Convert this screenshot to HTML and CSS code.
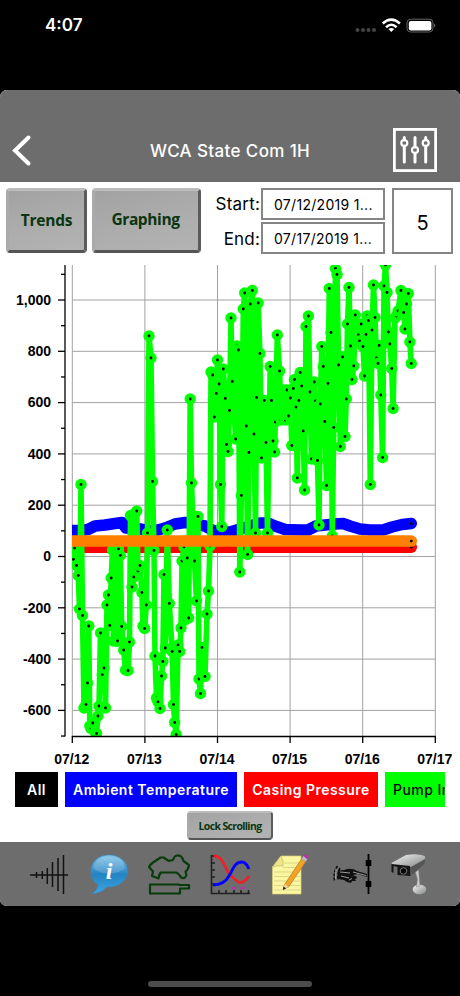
FILE: index.html
```html
<!DOCTYPE html>
<html lang="en">

<head>
    <meta charset="UTF-8">
    <title>WCA State Com 1H</title>
    <link rel="stylesheet" href="styles.css">
</head>

<body>
    <div class="status-bar">
        <span class="time">4:07</span>
        <svg class="status-icons" width="82" height="16" viewBox="0 0 82 16">
            <g fill="#444">
                <circle cx="3.5" cy="12" r="2" /><circle cx="9" cy="12" r="2" />
                <circle cx="14.5" cy="12" r="2" /><circle cx="20" cy="12" r="2" />
            </g>
            <g fill="none" stroke="#fff" stroke-width="2.5">
                <path d="M28.7 5.5 Q37.3 -2.2 45.9 5.5" />
                <path d="M32 9.2 Q37.3 4.4 42.6 9.2" />
            </g>
            <path d="M34.4 11 Q37.3 8.8 40.2 11 L37.3 14 Z" fill="#fff" />
            <rect x="53" y="1.2" width="26" height="12.8" rx="3.6" fill="none" stroke="#666" />
            <rect x="54.8" y="3" width="22.6" height="9.4" rx="2" fill="#fff" />
            <path d="M80.2 5.4 Q82.2 7.5 80.2 9.8 Z" fill="#777" />
        </svg>
    </div>

    <div class="app">
        <div class="header">
            <svg class="back" width="22" height="34" viewBox="0 0 22 34">
                <path d="M18.5 4.5 L5 17.5 L18.5 30.5" fill="none" stroke="#fff" stroke-width="4" stroke-linecap="round" />
            </svg>
            <h1>WCA State Com 1H</h1>
            <svg class="settings" width="44" height="44" viewBox="0 0 44 44" fill="none" stroke="#fff">
                <rect x="1.4" y="1.4" width="41.2" height="41.2" stroke-width="2.8" />
                <g stroke-width="3" stroke-linecap="round">
                    <path d="M11.3 9.5 V12 M11.3 18 V34 M22 9.5 V19 M22 25 V34 M32.7 9.5 V12 M32.7 18 V34" />
                </g>
                <g stroke-width="2.2">
                    <circle cx="11.3" cy="15" r="3" /><circle cx="22" cy="22" r="3" /><circle cx="32.7" cy="15" r="3" />
                </g>
            </svg>
        </div>

        <div class="controls">
            <button class="btn trends">Trends</button>
            <button class="btn graphing">Graphing</button>
            <div class="dates">
                <label>Start:</label>
                <div class="date-box">07/12/2019 1...</div>
                <label>End:</label>
                <div class="date-box">07/17/2019 1...</div>
            </div>
            <div class="days">5</div>
        </div>

        <svg id="chart" class="chart" width="460" height="507" viewBox="0 260 460 507"></svg>

        <div class="legend">
            <span class="tag all">All</span>
            <span class="tag ambient">Ambient Temperature</span>
            <span class="tag casing">Casing Pressure</span>
            <span class="tag pump">Pump In</span>
        </div>
        <button class="btn lock">Lock Scrolling</button>

        <div class="toolbar">
            <svg width="44" height="44" viewBox="0 0 44 44" stroke="#111" stroke-width="1.5">
                <path d="M3 23 H41 M9.5 20 V26 M15.3 19 V27 M20.3 16 V32 M25.5 10 V35 M31 6 V39 M36.5 3 V42" />
            </svg>
            <svg width="44" height="44" viewBox="1 0 44 44">
                <defs>
                    <linearGradient id="bubble" x1="0" y1="0" x2="0" y2="1">
                        <stop offset="0" stop-color="#83c4e8" />
                        <stop offset=".5" stop-color="#2583c3" />
                        <stop offset="1" stop-color="#39a5e2" />
                    </linearGradient>
                </defs>
                <path d="M22 3 C33 3 40.5 10 40.5 19 C40.5 28 33 35 20 35 Q13 42 5 41.5 Q11 38 11 32.5 C6 29 4 25 4 19 C4 10 11 3 22 3 Z" fill="url(#bubble)" stroke="#3689bd" stroke-width=".6" />
                <path d="M22 4.5 C32 4.5 38 9 37.5 17 Q22 26 7 17 C6.5 9 13 4.5 22 4.5 Z" fill="#fff" opacity=".16" />
                <text class="info-mark" x="22" y="27">i</text>
            </svg>
            <svg width="44" height="44" viewBox="1 0 44 44" fill="none" stroke="#083d0b" stroke-width="2.2" stroke-linejoin="round">
                <path d="M2 15 Q3 12.5 6 10.5 L13.5 5.5 H16.5 L21.5 8.8 L26 8 Q27 4 30 3.5 Q33.5 3 35 5.5 L36.5 9 L42 13 Q41 18 38.5 19.7 L39.5 23 Q38 27.5 34 25.5 Q32 21.5 29 20.5 L14 20.5 Q12 22 11.5 26.5 L5 24 L6 19.5 Z" />
                <path d="M3 32.5 H32 V33 H42 V36.5 H33 V41.5 H3 Z" />
            </svg>
            <svg width="44" height="44" viewBox="0 0 44 44" fill="none">
                <path d="M2.5 3 V41.5 H41 M2.5 4 H6 M2.5 11 H6 M2.5 18 H6 M2.5 25 H6 M2.5 32 H6 M10 41 V38 M17 41 V38 M25 41 V38 M32 41 V38 M39.5 41 V38" stroke="#222" stroke-width="1.6" />
                <path d="M5 4 C14 4 16 17 21 23 Q26 27.5 30 30.5 Q35 31.5 40 24" stroke="#eb2227" stroke-width="2.8" />
                <path d="M4 33 Q15 33 20 24 C24 18 25 10 33 10 Q37 10 40 17" stroke="#00f" stroke-width="2.8" />
                <path d="M23 36 H27 M31.5 36 H36" stroke="#c02cab" stroke-width="2" />
            </svg>
            <svg width="44" height="44" viewBox="0 0 44 44">
                <path d="M12 4 H32 V42 H3.5 V15 Z" fill="#fbf6a0" stroke="#d8ce72" stroke-width=".7" />
                <path d="M5 20 H31 M5 24.5 H31 M5 29 H31 M5 33.5 H31 M5 38 H31 M15 11 H31 M14 15.5 H31" stroke="#d4cf83" stroke-width=".8" />
                <path d="M3.5 15 L12 4 Q15 9 14 14 Q9 13 3.5 15 Z" fill="#eee58a" stroke="#c4ba67" stroke-width=".7" />
                <path d="M16 32 L32.5 7 L36.5 10 L19.5 35 L14 37 Z" fill="#f1a526" stroke="#c57920" stroke-width=".8" />
                <path d="M16 32 L19.5 35 L14 37 Z" fill="#ead3a2" />
                <path d="M14 38 L14.5 34.5 L17 36.5 Z" fill="#111" />
                <path d="M32.5 7 L34.5 4 L38.5 7 L36.5 10 Z" fill="#bbb" />
                <path d="M34.5 4 Q37 1.5 39.5 4.5 L38 7 Z" fill="#cc24bd" />
            </svg>
            <svg width="44" height="44" viewBox="0 0 44 44">
                <path d="M38.5 2 V42" stroke="#000" stroke-width="1.8" />
                <rect x="35.7" y="8" width="5.6" height="6" />
                <rect x="35.7" y="29" width="5.6" height="6" />
                <path d="M8 18 Q13 19 17 17 Q23 16 27 19 L37 22 L36.5 25 L28 22 L23 23 L27 25 Q27 27 25 27 L26 29 L22 29 L21 31 Q17 31 14 28 L8 27 Z" fill="#111" />
                <path d="M7.5 14 Q3 20 4.5 29 M10 16 Q7 21 8 28" fill="none" stroke="#111" stroke-width="1.6" stroke-dasharray="3 1" />
                <path d="M6 17 L5.5 27 M10 20 L20 21 M11 24 L19 26 M19 28 L22 26.5 M23 20 L36 23.5" fill="none" stroke="#aaa" stroke-width=".9" />
            </svg>
            <svg width="44" height="44" viewBox="0 0 44 44">
                <defs>
                    <linearGradient id="metal" x1="0" y1="0" x2="1" y2="1">
                        <stop offset="0" stop-color="#f4f4f4" />
                        <stop offset="1" stop-color="#858888" />
                    </linearGradient>
                </defs>
                <ellipse cx="29.5" cy="37.5" rx="6.8" ry="4.8" fill="url(#metal)" />
                <path d="M25.5 20 L28.5 18 L30 34 L26.5 35 L27.5 27 Z" fill="#ccc" stroke="#888" stroke-width=".5" />
                <path d="M20 14 L35 6 V11 L22 23 Z" fill="#555" />
                <path d="M1.5 11 L16 3 Q27 1 35 4 V7 L21 15 L3 13.5 Z" fill="url(#metal)" />
                <path d="M1.5 12 L20 14 L20.5 24 L7.5 23 V15 L3.5 14 V21 L1.5 20 Z" fill="#151515" />
                <circle cx="13.5" cy="19" r="3.3" fill="#060606" stroke="#777" stroke-width="1" />
            </svg>
        </div>
    </div>
    <div class="home-bar"></div>

    <script src="chart.js"></script>
</body>

</html>
```

FILE: styles.css
```css
* {
    box-sizing: border-box;
}

body {
    margin: 0;
    height: 996px;
    overflow: hidden;
    background-color: #000;
    font-family: Inter, "Liberation Sans", sans-serif;
}

.status-bar {
    height: 90px;
    padding: 15px 24px 0 45px;
    display: flex;
    justify-content: space-between;
    color: #fff;
}

.time {
    font-size: 17px;
    font-weight: 600;
    line-height: 21px;
}

.status-icons {
    margin-top: 3px;
}

.app {
    height: 816px;
    background-color: #fff;
    border-radius: 7px;
    overflow: hidden;
}

.header {
    height: 92px;
    padding: 38px 23px 0 10px;
    display: flex;
    justify-content: space-between;
    background-color: #6d6d6d;
}

.back {
    margin-top: 5px;
}

.header h1 {
    margin: 13px 0 0 35px;
    color: #fff;
    font-size: 17px;
    font-weight: 500;
    line-height: 20px;
    letter-spacing: 0.37px;
    white-space: nowrap;
}

.controls {
    height: 78px;
    padding: 6px 7px 0 6px;
    display: flex;
}

.btn {
    padding: 0;
    border: 3px solid;
    border-color: #bcbcbc #5b5b5b #555 #aaa;
    border-radius: 4px;
    background: linear-gradient(165deg, #a2a2a2, #acacac 50%, #b3b3b3);
    color: #0b350f;
    font-family: "Open Sans", sans-serif;
    font-weight: 700;
}

.trends {
    width: 81px;
    height: 65px;
    padding-bottom: 2px;
    font-size: 15.5px;
    letter-spacing: -0.2px;
}

.graphing {
    width: 109px;
    height: 65px;
    margin-left: 5px;
    padding: 0 2px 4px 0;
    font-size: 15.5px;
    letter-spacing: -0.4px;
}

.dates {
    margin-left: 12px;
    display: grid;
    grid-template-columns: 47px 124px;
    grid-template-rows: 31px 31px;
    gap: 3px 1px;
    align-items: center;
}

.dates label {
    font-size: 17px;
    letter-spacing: 0.2px;
    padding-top: 1px;
    text-align: right;
}

.dates label:nth-of-type(2) {
    padding-top: 3px;
}

.date-box {
    height: 32px;
    border: 2px solid #858585;
    padding: 1px 0 0 11px;
    font-size: 14px;
    line-height: 28px;
    letter-spacing: 0.3px;
    white-space: nowrap;
}

.days {
    width: 61px;
    height: 66px;
    margin-left: 7px;
    border: 2px solid #858585;
    font-size: 20px;
    line-height: 66px;
    text-align: center;
}

.chart {
    display: block;
}

.axis-label {
    font-family: "Liberation Sans", sans-serif;
    font-size: 14px;
    font-weight: bold;
}

.legend {
    height: 40px;
    margin: 0 15px;
    padding-top: 5px;
    display: flex;
    gap: 7px;
    overflow: hidden;
}

.tag {
    flex: none;
    height: 35px;
    color: #fff;
    font-size: 14px;
    font-weight: 600;
    line-height: 36px;
    text-align: center;
    letter-spacing: 0.46px;
}

.all {
    width: 43px;
    background-color: #000;
}

.ambient {
    width: 172px;
    background-color: #00f;
}

.casing {
    width: 134px;
    background-color: #f00;
}

.pump {
    width: 60px;
    padding-left: 8px;
    background-color: #0f0;
    color: #000;
    font-weight: 500;
    text-align: left;
    white-space: nowrap;
    overflow: hidden;
}

.lock {
    display: block;
    width: 86px;
    height: 29px;
    margin: 4px auto 2px;
    border-width: 2px;
    font-size: 10.5px;
    letter-spacing: -0.65px;
    white-space: nowrap;
}

.toolbar {
    height: 64px;
    padding: 10px 26px 0 27px;
    display: flex;
    justify-content: space-between;
    background-color: #6d6d6d;
}

.info-mark {
    fill: #fff;
    font: italic bold 24px "Liberation Serif", serif;
    text-anchor: middle;
}

.home-bar {
    width: 164px;
    height: 6px;
    margin: 75px auto 0;
    border-radius: 3px;
    background-color: #4c4c4c;
}
```

FILE: chart.js
```js
var chart = document.getElementById("chart");

var LEFT = 72.3;
var TOP = 265;
var BOTTOM = 736.5;
var DAY = 72.6;

// [x, y] samples, oldest first
var pump = [
    [72.3, 546], [73.5, 559.5], [74.5, 548], [76.5, 565.5], [78.3, 575.5], [79.5, 609], [81, 484.5], [82.5, 615.5],
    [84, 708], [86, 704.5], [87.5, 683], [88.8, 626], [89.8, 726], [91, 728.5], [92.8, 723], [95, 732], [96.5, 733.5],
    [98, 716], [99, 706], [100.5, 633], [102.3, 674.5], [104, 668], [105.5, 708], [107, 605], [108.5, 595],
    [109.8, 625.5], [111.2, 578], [112.5, 550], [113.5, 641], [115, 548], [116, 641], [117.5, 641], [118.5, 549],
    [120.3, 555.5], [121.7, 626.5], [123.7, 650], [125.5, 670], [128, 670.5], [129.5, 642], [130.5, 515.5],
    [132, 587], [133.8, 577], [134.5, 514], [136.7, 511], [138, 571], [140, 565.5], [141.9, 592.5], [143, 626],
    [144.6, 628.5], [146.3, 605], [147.5, 533], [149, 336], [151, 358], [152.5, 481.5], [154, 550.5], [155, 656],
    [156.5, 698], [158, 702], [160, 708.5], [161.5, 676], [162.8, 661.5], [164, 574.5], [165.3, 648], [167.3, 530],
    [169.3, 603.5], [172.2, 651.5], [173.5, 704.5], [174.7, 722.5], [176.2, 734.5], [178, 645], [179.7, 651.5],
    [181, 628], [182, 561], [184, 547], [185, 620], [187.3, 558], [188.7, 618], [190.2, 399], [191.5, 483],
    [194.5, 561], [196.5, 601], [198, 516.5], [199, 679], [200.5, 693.5], [202, 647.5], [205, 676.5], [207, 614],
    [208.5, 591], [210, 546], [211, 372], [212.7, 375], [214.3, 417], [216.3, 393.5], [217.5, 360], [219.1, 384],
    [220.5, 484.5], [221.8, 526.5], [223.3, 369], [225.3, 398.5], [226.5, 444.5], [228, 451.5], [229.5, 410.5],
    [231, 318], [232.3, 381.5], [235.7, 439], [237, 346], [238.5, 350], [239.8, 572], [241.4, 495.5], [243.3, 309],
    [244.7, 293], [246.3, 426], [247.6, 554.5], [249, 452.5], [250.3, 304], [252.3, 290.5], [254, 434], [255.5, 533],
    [256.5, 397.5], [258.2, 303], [259.9, 353.5], [261.5, 458], [264.3, 400.5], [266, 442.5], [267.5, 533],
    [270.2, 366.5], [271.5, 400.5], [273, 441], [274.6, 452], [275.3, 422], [277.3, 335], [279.6, 371],
    [281, 420], [284, 390], [285.3, 420], [287, 390], [288.5, 416], [290.3, 398], [291.8, 445.5], [293.3, 388.5],
    [294.5, 379.5], [296, 407], [297.3, 478], [298.9, 400.5], [300.2, 372.5], [301.7, 386], [303.2, 431],
    [304.5, 490], [306, 326.5], [308.4, 316], [310, 392], [311.5, 459], [314.3, 382], [315.5, 401], [317.5, 460.5],
    [319, 525], [320.3, 404], [321.8, 346.5], [323.3, 366.5], [324.8, 421.5], [326.5, 485.5], [328, 383.5],
    [329.3, 288.5], [331, 332.5], [332.3, 536], [333.7, 427.5], [335.5, 268.5], [337, 274.5], [338.6, 365],
    [340.3, 446.5], [342.6, 357], [345, 436.5], [346.3, 399], [347.5, 324], [349, 287.5], [350.5, 346],
    [352, 379.5], [353.8, 366], [355.3, 315], [358.3, 335], [359.6, 341], [361.2, 324], [363, 346.5], [364.5, 376],
    [366, 334.5], [367, 316], [368.5, 320.5], [370.3, 484.5], [372, 330], [373.5, 285], [375, 317.5], [376.5, 358],
    [378, 363.5], [379.2, 345.5], [380.8, 395], [382.6, 457.5], [384, 286], [385.5, 265], [387, 292.5],
    [388.4, 332], [389.9, 344], [391.7, 368.5], [393.1, 408.5], [395, 318], [396.5, 316], [398, 311], [401, 290.5],
    [403.7, 312.5], [405, 329], [406.5, 304], [408.3, 293.5], [409.9, 342], [411.3, 363.5]
];

var ambient = [
    [72, 530.5], [80, 530.5], [88, 529.5], [95, 526], [105, 525], [115, 523.5], [122, 522.5], [126, 528], [140, 529],
    [150, 531], [158, 530], [165, 528], [175, 524], [185, 522.5], [195, 524], [205, 526], [212, 530], [220, 532],
    [230, 532], [240, 529], [250, 526], [260, 523], [268, 523], [275, 526], [285, 529.5], [300, 530], [308, 530],
    [316, 526], [325, 525], [335, 524], [343, 523.5], [350, 526], [360, 529], [370, 530], [383, 530], [392, 527],
    [402, 524.5], [411.3, 523.5]
];

function draw(parent, name, attrs, text) {
    var el = document.createElementNS("http://www.w3.org/2000/svg", name);
    for (var key in attrs) {
        el.setAttribute(key, attrs[key]);
    }
    if (text) {
        el.textContent = text;
    }
    parent.appendChild(el);
    return el;
}

function line(x1, y1, x2, y2, color, width) {
    draw(chart, "line", { x1: x1, y1: y1, x2: x2, y2: y2, stroke: color, "stroke-width": width });
}

// smooth series: wide band with a marker on the last sample
function band(parent, points, color) {
    var last = points[points.length - 1];
    draw(parent, "polyline", {
        points: points.join(" "), fill: "none", stroke: color,
        "stroke-width": 11.5, "stroke-linejoin": "round", "stroke-linecap": "round"
    });
    draw(parent, "circle", { cx: last[0], cy: last[1], r: 1.4 });
}

// grid
for (var d = 0; d <= 5; d++) {
    line(LEFT + d * DAY, TOP, LEFT + d * DAY, BOTTOM, "#a2a2a2", 1);
}
for (var v = -600; v <= 1000; v += 200) {
    var gy = 556.5 - v * 0.2565;
    line(LEFT, gy, LEFT + 5 * DAY, gy, "#a2a2a2", 1);
}

// series
var clip = draw(chart, "clipPath", { id: "plot" });
draw(clip, "rect", { x: 72, y: TOP, width: 364, height: BOTTOM - TOP });
var plot = draw(chart, "g", { "clip-path": "url(#plot)" });

band(plot, ambient, "#00f");
band(plot, [[72, 547.3], [411.3, 547.3]], "#f00");
draw(plot, "polyline", {
    points: pump.join(" "), fill: "none", stroke: "#0f0", "stroke-width": 5.6, "stroke-linejoin": "round"
});
pump.forEach(function (p) {
    draw(plot, "circle", { cx: p[0], cy: p[1], r: 5.7, fill: "#0f0" });
    draw(plot, "circle", { cx: p[0], cy: p[1], r: 1.4 });
});
band(plot, [[72, 541.1], [411.3, 541.1]], "#ff8000");

// axes
line(65, TOP, 65, BOTTOM, "#000", 1.3);
line(LEFT - 0.5, BOTTOM, LEFT + 5 * DAY + 0.5, BOTTOM, "#000", 1.3);
for (v = -700; v <= 1100; v += 100) {
    var y = 556.5 - v * 0.2565;
    var major = v % 200 === 0;
    line(major ? 58 : 61, y, 65, y, "#000", 1.3);
    if (major) {
        draw(chart, "text", { x: 51, y: y + 4.7, "text-anchor": "end", "class": "axis-label" }, v.toLocaleString("en-US"));
    }
}
for (d = 0; d <= 5; d++) {
    var x = LEFT + d * DAY;
    line(x, BOTTOM, x, 743, "#000", 1.3);
    draw(chart, "text", { x: x - 0.5, y: 764, "text-anchor": "middle", "class": "axis-label" }, "07/" + (12 + d));
}
```
